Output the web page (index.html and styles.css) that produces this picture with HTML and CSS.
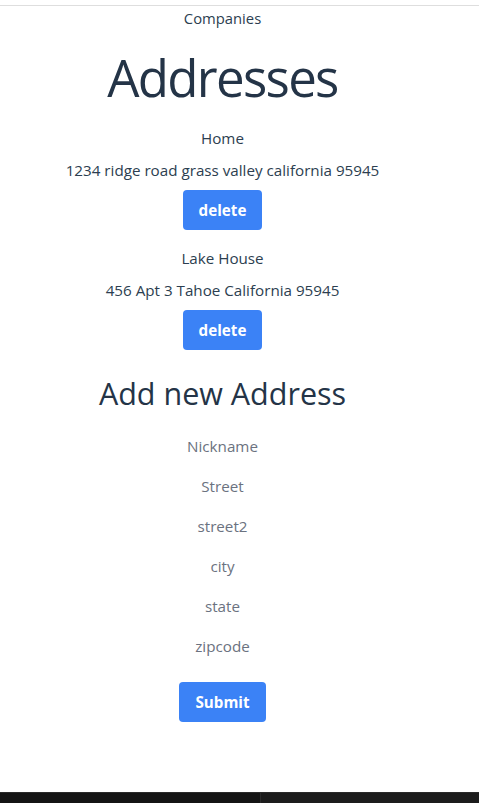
FILE: index.html
```html
<!DOCTYPE html>
<html lang="en">
<head>
<meta charset="utf-8">
<title>Addresses</title>
<link rel="stylesheet" href="styles.css">
</head>
<body>
<div class="page">
  <div class="topline"></div>
  <div class="app">
    <nav class="nav"><a class="nav-link">Companies</a></nav>
    <h1 class="title">Addresses</h1>
    <div class="address">
      <p class="line">Home</p>
      <p class="line">1234 ridge road grass valley california 95945</p>
      <button class="btn">delete</button>
    </div>
    <div class="address">
      <p class="line">Lake House</p>
      <p class="line">456 Apt 3 Tahoe California 95945</p>
      <button class="btn">delete</button>
    </div>
    <h2 class="subtitle">Add new Address</h2>
    <form class="form">
      <input class="field" placeholder="Nickname">
      <input class="field" placeholder="Street">
      <input class="field" placeholder="street2">
      <input class="field" placeholder="city">
      <input class="field" placeholder="state">
      <input class="field" placeholder="zipcode">
      <button class="btn submit" type="button">Submit</button>
    </form>
  </div>
  <div class="taskbar">
    <div class="task-left"></div>
    <div class="task-right"></div>
  </div>
</div>
</body>
</html>
```

FILE: styles.css
```css
* { box-sizing: border-box; }
html, body { margin: 0; padding: 0; background: #fff; }
body {
  font-family: "Open Sans", "Noto Sans", sans-serif;
  font-size: 15.2px;
  line-height: 24px;
  color: #2c3e50;
}
.page {
  min-height: 100vh;
  display: flex;
  flex-direction: column;
}
.topline {
  height: 6px;
  border-bottom: 1px solid #dedede;
}
.app {
  width: 445px;
  display: flex;
  flex-direction: column;
  align-items: center;
  text-align: center;
}
.nav { height: 24px; }
.nav-link { color: #2c3e50; font-size: 14.8px; }
.title {
  margin: 15px 0 0;
  font-size: 51px;
  line-height: 64px;
  letter-spacing: -1.7px;
  font-weight: 400;
  color: #243447;
}
.address {
  display: flex;
  flex-direction: column;
  align-items: center;
  gap: 8px;
  margin-top: 17px;
}
.address + .address { margin-top: 16px; }
.line { margin: 0; }
.btn {
  font-family: inherit;
  font-size: 15.2px;
  line-height: 24px;
  font-weight: 700;
  color: #fff;
  background: #3b82f6;
  border: 0;
  border-radius: 4px;
  padding: 8px 16px;
  cursor: pointer;
}
.subtitle {
  margin: 25px 0 0;
  font-size: 30.5px;
  line-height: 36px;
  font-weight: 400;
  color: #243447;
}
.form {
  display: flex;
  flex-direction: column;
  align-items: center;
  margin-top: 15px;
}
.field {
  font-family: inherit;
  font-size: 15.2px;
  line-height: 24px;
  padding: 8px;
  width: 200px;
  border: 0;
  outline: none;
  text-align: center;
  color: #2c3e50;
  background: transparent;
}
.field::placeholder { color: #6b7280; }
.submit { margin-top: 16px; }
.taskbar {
  margin-top: auto;
  height: 11px;
  display: flex;
  background: #141414;
  border-top: 1px solid #2a2a2a;
}
.task-left { width: 260px; }
.task-right {
  flex: 1;
  background: #1c1c1c;
  border-left: 1px solid #2a2a2a;
}
```
